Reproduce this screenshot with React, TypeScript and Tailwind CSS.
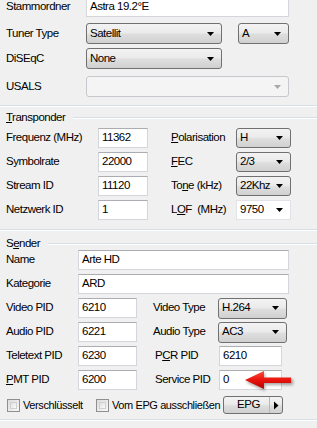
import React from 'react';
import clsx from 'clsx';

const font = "font-['Liberation_Sans',Arial,sans-serif]";

const DownArrow: React.FC<{ gray?: boolean }> = ({ gray }) => (
	<svg width="7" height="4" viewBox="0 0 7 4" className="shrink-0">
		<path d="M0 0h7L3.5 4z" fill={gray ? '#a8a8a8' : '#000'} />
	</svg>
);

const TextBox: React.FC<{ value?: string; className: string }> = ({ value, className }) => (
	<div
		className={clsx(
			'flex h-[20px] items-center border border-[#d3d6db] border-t-[#abadb3] bg-white pl-[3px] text-black',
			className,
		)}>
		{value}
	</div>
);

const Combo: React.FC<{ value?: string; className: string; disabled?: boolean; editable?: boolean }> = ({
	value,
	className,
	disabled,
	editable,
}) => (
	<div
		className={clsx(
			'flex items-center justify-between rounded-[3px] border pl-[3px] pr-[7px]',
			disabled && 'border-[#c5c8cc] bg-[#f4f4f4]',
			editable && 'rounded-none border-[#e0e3e8] bg-white',
			!disabled &&
				!editable &&
				'border-[#707070] bg-[linear-gradient(#f3f3f3,#ebebeb_45%,#dedede_55%,#d0d0d0)]',
			className,
		)}>
		<span className="text-black">{value}</span>
		<DownArrow gray={disabled} />
	</div>
);

const GroupHeader: React.FC<{ children: React.ReactNode; className?: string }> = ({ children, className }) => (
	<div className={clsx('flex h-[12px] items-center', className)}>
		<span className="pl-[6px] pr-[8px] text-black">{children}</span>
		<div className="h-[2px] flex-1 border-t border-[#d5dfe5] bg-white" />
	</div>
);

const Sep: React.FC<{ className?: string }> = ({ className }) => (
	<div className={clsx('h-[2px] border-t border-[#d5dfe5] bg-white', className)} />
);

const Check: React.FC<{ label: string; className?: string }> = ({ label, className }) => (
	<div className={clsx('flex shrink-0 items-center', className)}>
		<div className="h-[13px] w-[13px] shrink-0 border border-[#8e8f8f] bg-[linear-gradient(135deg,#dcdcdc,#f8f8f8)] p-[2px]">
			<div className="h-full w-full border border-[#d0d0d0] bg-[linear-gradient(135deg,#e0e0e0,#fafafa)]" />
		</div>
		<span className="whitespace-nowrap pl-[3px] text-black">{label}</span>
	</div>
);

export default function App() {
	return (
		<div
			className={clsx(
				'relative h-[428px] w-[317px] overflow-hidden bg-[#f0f0f0] text-[11.5px] leading-none tracking-[-0.5px]',
				font,
			)}>
			{/* top */}
			<div className="mt-[-3px] flex h-[20px] items-center">
				<span className="w-[86px] pl-[6px]">Stammordner</span>
				<TextBox value="Astra 19.2°E" className="w-[203px]" />
			</div>
			<div className="mt-[6px] flex h-[21px] items-center">
				<span className="w-[86px] pl-[6px]">Tuner Type</span>
				<Combo value="Satellit" className="h-[21px] w-[136px]" />
				<Combo value="A" className="ml-[16px] h-[21px] w-[51px]" />
			</div>
			<div className="mt-[4px] flex h-[21px] items-center">
				<span className="w-[86px] pl-[6px]">DiSEqC</span>
				<Combo value="None" className="h-[21px] w-[136px]" />
			</div>
			<div className="mt-[7px] flex h-[21px] items-center">
				<span className="w-[86px] pl-[6px]">USALS</span>
				<Combo disabled className="h-[21px] w-[203px]" />
			</div>
			<Sep className="mt-[8px]" />

			{/* Transponder */}
			<GroupHeader className="mt-[5px]">
				<u>T</u>ransponder
			</GroupHeader>
			<div className="mt-[4px] flex h-[20px] items-center">
				<span className="w-[98px] pl-[6px]">Frequenz (MHz)</span>
				<TextBox value="11362" className="w-[50px]" />
				<span className="ml-[23px] w-[65px]">
					<u>P</u>olarisation
				</span>
				<Combo value="H" className="h-[20px] w-[55px]" />
			</div>
			<div className="mt-[4px] flex h-[20px] items-center">
				<span className="w-[98px] pl-[6px]">Symbolrate</span>
				<TextBox value="22000" className="w-[50px]" />
				<span className="ml-[23px] w-[65px]">
					<u>F</u>EC
				</span>
				<Combo value="2/3" className="h-[20px] w-[55px]" />
			</div>
			<div className="mt-[4px] flex h-[20px] items-center">
				<span className="w-[98px] pl-[6px]">Stream ID</span>
				<TextBox value="11120" className="w-[50px]" />
				<span className="ml-[23px] w-[65px]">
					To<u>n</u>e (kHz)
				</span>
				<Combo value="22Khz" className="h-[20px] w-[55px]" />
			</div>
			<div className="mt-[4px] flex h-[20px] items-center">
				<span className="w-[98px] pl-[6px]">Netzwerk ID</span>
				<TextBox value="1" className="w-[50px]" />
				<span className="ml-[23px] w-[65px]">
					L<u>O</u>F&nbsp; (MHz)
				</span>
				<Combo editable value="9750" className="h-[20px] w-[55px]" />
			</div>
			<Sep className="mt-[9px]" />

			{/* Sender */}
			<GroupHeader className="mt-[7px]">
				S<u>e</u>nder
			</GroupHeader>
			<div className="flex h-[20px] items-center">
				<span className="w-[78px] pl-[6px]">Name</span>
				<TextBox value="Arte HD" className="w-[211px]" />
			</div>
			<div className="mt-[4px] flex h-[20px] items-center">
				<span className="w-[78px] pl-[6px]">Kategorie</span>
				<TextBox value="ARD" className="w-[211px]" />
			</div>
			<div className="mt-[4px] flex h-[20px] items-center">
				<span className="w-[78px] pl-[6px]">Video PID</span>
				<TextBox value="6210" className="w-[59px]" />
				<span className="ml-[16px] w-[65px]">Video Type</span>
				<Combo value="H.264" className="h-[21px] w-[69px]" />
			</div>
			<div className="mt-[4px] flex h-[20px] items-center">
				<span className="w-[78px] pl-[6px]">Audio PID</span>
				<TextBox value="6221" className="w-[59px]" />
				<span className="ml-[16px] w-[65px]">Audio Type</span>
				<Combo value="AC3" className="h-[21px] w-[69px]" />
			</div>
			<div className="mt-[4px] flex h-[20px] items-center">
				<span className="w-[78px] pl-[6px]">Teletext PID</span>
				<TextBox value="6230" className="w-[59px]" />
				<span className="ml-[18px] w-[64px]">
					P<u>C</u>R PID
				</span>
				<TextBox value="6210" className="w-[63px]" />
			</div>
			<div className="mt-[4px] flex h-[20px] items-center">
				<span className="w-[78px] pl-[6px]">
					<u>P</u>MT PID
				</span>
				<TextBox value="6200" className="w-[59px]" />
				<span className="ml-[18px] w-[64px]">Service PID</span>
				<TextBox value="0" className="w-[63px]" />
			</div>
			<div className="mt-[6px] flex h-[18px] items-center text-[11px] tracking-[-0.4px]">
				<Check label="Verschlüsselt" className="ml-[7px] w-[89px]" />
				<Check label="Vom EPG ausschließen" className="w-[127px]" />
				<div className="flex h-[18px] w-[60px] shrink-0 items-center rounded-[3px] border border-[#707070] bg-[linear-gradient(#f3f3f3,#ebebeb_45%,#dedede_55%,#d0d0d0)] text-[11.5px]">
					<span className="flex-1 pl-[4px] text-center text-black">EPG</span>
					<div className="h-full w-px bg-[#b8b8b8]" />
					<svg width="12" height="9" viewBox="0 0 12 9" className="shrink-0">
						<path d="M4 0.5L8.5 4.5L4 8.5z" fill="#000" />
					</svg>
				</div>
			</div>
			<Sep className="mt-[5px]" />

			{/* red arrow overlay */}
			<svg width="60" height="26" viewBox="0 0 60 26" className="absolute left-[243px] top-[368px]">
				<defs>
					<linearGradient id="ar" x1="0" y1="0" x2="0" y2="1">
						<stop offset="0" stopColor="#ff4a3a" />
						<stop offset="0.5" stopColor="#e8140c" />
						<stop offset="1" stopColor="#b80000" />
					</linearGradient>
					<filter id="sh" x="-20%" y="-20%" width="150%" height="180%">
						<feGaussianBlur stdDeviation="1.4" />
					</filter>
				</defs>
				<path d="M3 14L22 5V11H50V17H22V23Z" fill="#000" opacity="0.35" filter="url(#sh)" />
				<path d="M2 12L21 3V9.5H48V15H21V21Z" fill="url(#ar)" />
			</svg>
		</div>
	);
}
